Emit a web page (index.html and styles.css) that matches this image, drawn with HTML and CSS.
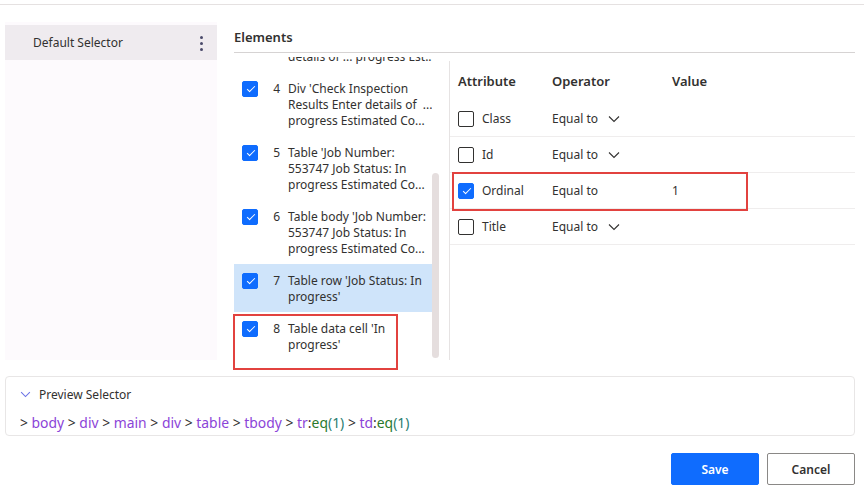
FILE: index.html
```html
<!DOCTYPE html>
<html lang="en">
<head>
<meta charset="utf-8">
<title>Selector builder</title>
<link rel="stylesheet" href="styles.css">
</head>
<body>
<div class="page">
  <div class="rule"></div>
  <div class="main">
    <aside class="sidebar">
      <div class="selector-row">
        <span>Default Selector</span>
        <span class="kebab"><i></i><i></i><i></i></span>
      </div>
    </aside>
    <section class="content">
      <h2 class="elements-title">Elements</h2>
      <div class="panes">
        <div class="list-pane">
          <div class="list-scroll">
            <ul class="list">
              <li class="item">
                <span class="cb on"></span><span class="num">3</span>
                <span class="txt"><span>Div 'Check Inspection</span><span>Results Enter details of ...</span><span>details of ... progress Est...</span></span>
              </li>
              <li class="item">
                <span class="cb on"></span><span class="num">4</span>
                <span class="txt"><span>Div 'Check Inspection</span><span>Results Enter details of &nbsp;...</span><span>progress Estimated Co...</span></span>
              </li>
              <li class="item">
                <span class="cb on"></span><span class="num">5</span>
                <span class="txt"><span>Table 'Job Number:</span><span>553747 Job Status: In</span><span>progress Estimated Co...</span></span>
              </li>
              <li class="item">
                <span class="cb on"></span><span class="num">6</span>
                <span class="txt"><span>Table body 'Job Number:</span><span>553747 Job Status: In</span><span>progress Estimated Co...</span></span>
              </li>
              <li class="item selected">
                <span class="cb on"></span><span class="num">7</span>
                <span class="txt"><span>Table row 'Job Status: In</span><span>progress'</span></span>
              </li>
              <li class="item">
                <span class="cb on"></span><span class="num">8</span>
                <span class="txt"><span>Table data cell 'In</span><span>progress'</span></span>
              </li>
            </ul>
          </div>
          <div class="track"><div class="thumb"></div></div>
          <div class="highlight item-mark"></div>
        </div>
        <div class="attr-pane">
          <div class="attr-row head">
            <span class="c-attr">Attribute</span>
            <span class="c-op">Operator</span>
            <span class="c-val">Value</span>
          </div>
          <div class="attr-row">
            <span class="c-attr"><span class="cb"></span>Class</span>
            <span class="c-op">Equal to <svg class="chev" viewBox="0 0 12 8" width="12" height="8"><path d="M1 1.5 L6 6.5 L11 1.5" fill="none" stroke="#323130" stroke-width="1.1"/></svg></span>
            <span class="c-val"></span>
          </div>
          <div class="attr-row">
            <span class="c-attr"><span class="cb"></span>Id</span>
            <span class="c-op">Equal to <svg class="chev" viewBox="0 0 12 8" width="12" height="8"><path d="M1 1.5 L6 6.5 L11 1.5" fill="none" stroke="#323130" stroke-width="1.1"/></svg></span>
            <span class="c-val"></span>
          </div>
          <div class="attr-row">
            <span class="c-attr"><span class="cb on"></span>Ordinal</span>
            <span class="c-op">Equal to</span>
            <span class="c-val">1</span>
          </div>
          <div class="attr-row">
            <span class="c-attr"><span class="cb"></span>Title</span>
            <span class="c-op">Equal to <svg class="chev" viewBox="0 0 12 8" width="12" height="8"><path d="M1 1.5 L6 6.5 L11 1.5" fill="none" stroke="#323130" stroke-width="1.1"/></svg></span>
            <span class="c-val"></span>
          </div>
          <div class="highlight ordinal-mark"></div>
        </div>
      </div>
    </section>
  </div>
  <section class="preview">
    <div class="preview-head">
      <svg class="pchev" viewBox="0 0 12 8" width="11" height="7"><path d="M1 1.2 L6 6.3 L11 1.2" fill="none" stroke="#6a72e6" stroke-width="1.2"/></svg>
      <span>Preview Selector</span>
    </div>
    <div class="path">
      <span class="g">&gt;</span> <span class="t">body</span> <span class="g">&gt;</span> <span class="t">div</span> <span class="g">&gt;</span> <span class="t">main</span> <span class="g">&gt;</span> <span class="t">div</span> <span class="g">&gt;</span> <span class="t">table</span> <span class="g">&gt;</span> <span class="t">tbody</span> <span class="g">&gt;</span> <span class="t">tr</span><span class="g">:</span><span class="f">eq</span><span class="n">(1)</span> <span class="g">&gt;</span> <span class="t">td</span><span class="g">:</span><span class="f">eq</span><span class="n">(1)</span>
    </div>
  </section>
  <div class="footer">
    <button class="btn primary">Save</button>
    <button class="btn">Cancel</button>
  </div>
</div>
</body>
</html>
```

FILE: styles.css
```css
* { box-sizing: border-box; }
html, body { margin: 0; padding: 0; background: #ffffff; }
body {
  font-family: "Noto Sans", "Open Sans", sans-serif;
  font-size: 12px;
  color: #323130;
}
.page { width: 864px; height: 493px; overflow: hidden; }
.rule { margin-top: 4px; border-top: 1px solid #e5e1e1; }

.main { display: flex; margin-top: 17px; height: 338px; }

.sidebar {
  margin-left: 5px;
  width: 212px;
  background: #fdfafd;
  padding-top: 3px;
}
.selector-row {
  height: 35px;
  background: #efebef;
  display: flex;
  align-items: center;
  justify-content: space-between;
  padding-left: 28px;
  padding-right: 14px;
}
.kebab { display: flex; flex-direction: column; gap: 3px; padding-top: 1px; }
.kebab i { display: block; width: 3px; height: 3px; border-radius: 50%; background: #4a4a6a; }

.content {
  margin-left: 17px;
  margin-right: 9px;
  flex: 1;
  display: flex;
  flex-direction: column;
}
.elements-title {
  margin: 5px 0 0 0;
  font-size: 13px;
  font-weight: 600;
  line-height: 20px;
  padding-bottom: 5px;
  border-bottom: 1px solid #d6d3d3;
}
.panes { display: flex; flex: 1; }

.list-pane {
  position: relative;
  width: 215px;
  margin-top: 4px;
  height: 303px;
  display: flex;
}
.list-scroll { width: 198px; height: 303px; overflow: hidden; }
.list { list-style: none; margin: -49px 0 0 0; padding: 0; }
.item {
  display: flex;
  align-items: flex-start;
  padding: 8px 0 8px 8px;
  line-height: 16px;
}
.item.selected { background: #cfe4fa; }
.cb {
  flex: none;
  width: 16px;
  height: 16px;
  border: 1px solid #323130;
  border-radius: 2px;
  margin-top: 1px;
  position: relative;
  background: #fff;
}
.cb.on { background: #0f6cfe; border-color: #0f6cfe; }
.cb.on::after {
  content: "";
  position: absolute;
  left: 4px;
  top: 4px;
  width: 7px;
  height: 3px;
  border-left: 1px solid #fff;
  border-bottom: 1px solid #fff;
  transform: rotate(-45deg);
}
.num { flex: none; width: 22px; text-align: right; margin-right: 8px; padding-top: 1px; }
.txt { display: flex; flex-direction: column; white-space: nowrap; padding-top: 1px; margin-bottom: -1px; }
.track { width: 7px; margin-left: 0; }
.thumb { margin-top: 116px; height: 185px; width: 7px; border-radius: 4px; background: #e5dede; }

.highlight { position: absolute; border: 2px solid #e2423f; pointer-events: none; }
.item-mark { left: -1px; top: 257px; width: 165px; height: 56px; }

.attr-pane {
  position: relative;
  flex: 1;
  margin-top: 8px;
  height: 299px;
  border-left: 1px solid #e6e3e3;
}
.attr-row {
  display: flex;
  align-items: center;
  height: 36px;
  border-bottom: 1px solid #efeded;
  padding-left: 8px;
}
.attr-row.head {
  height: 40px;
  border-bottom: none;
  font-size: 13px;
  font-weight: 600;
}
.c-attr { width: 94px; display: flex; align-items: center; gap: 8px; }
.attr-row .c-attr .cb { margin-top: 0; }
.c-op { width: 120px; display: flex; align-items: center; }
.chev { margin-left: 10px; }
.c-val { padding-left: 0; }
.ordinal-mark { left: 2px; top: 111px; width: 296px; height: 39px; }

.preview {
  margin: 16px 9px 0 5px;
  height: 60px;
  border: 1px solid #e8e6e6;
  border-radius: 4px;
  padding: 8px 0 0 13px;
}
.preview-head { display: flex; align-items: center; height: 18px; }
.pchev { margin-left: 1px; margin-right: 8px; }
.path { margin-top: 11px; font-size: 13.9px; line-height: 18px; padding-left: 1px; }
.path .g { color: #323130; }
.path .t { color: #8b44d8; }
.path .f { color: #2a7a2a; }
.path .n { color: #2a7d70; }

.footer {
  display: flex;
  justify-content: flex-end;
  gap: 8px;
  margin-top: 17px;
  margin-right: 9px;
}
.btn {
  font-family: inherit;
  font-size: 12px;
  font-weight: 600;
  width: 88px;
  height: 32px;
  border-radius: 2px;
  border: 1px solid #8a8886;
  background: #fff;
  color: #323130;
}
.btn.primary { background: #0f6cfe; border-color: #0f6cfe; color: #fff; }
```
